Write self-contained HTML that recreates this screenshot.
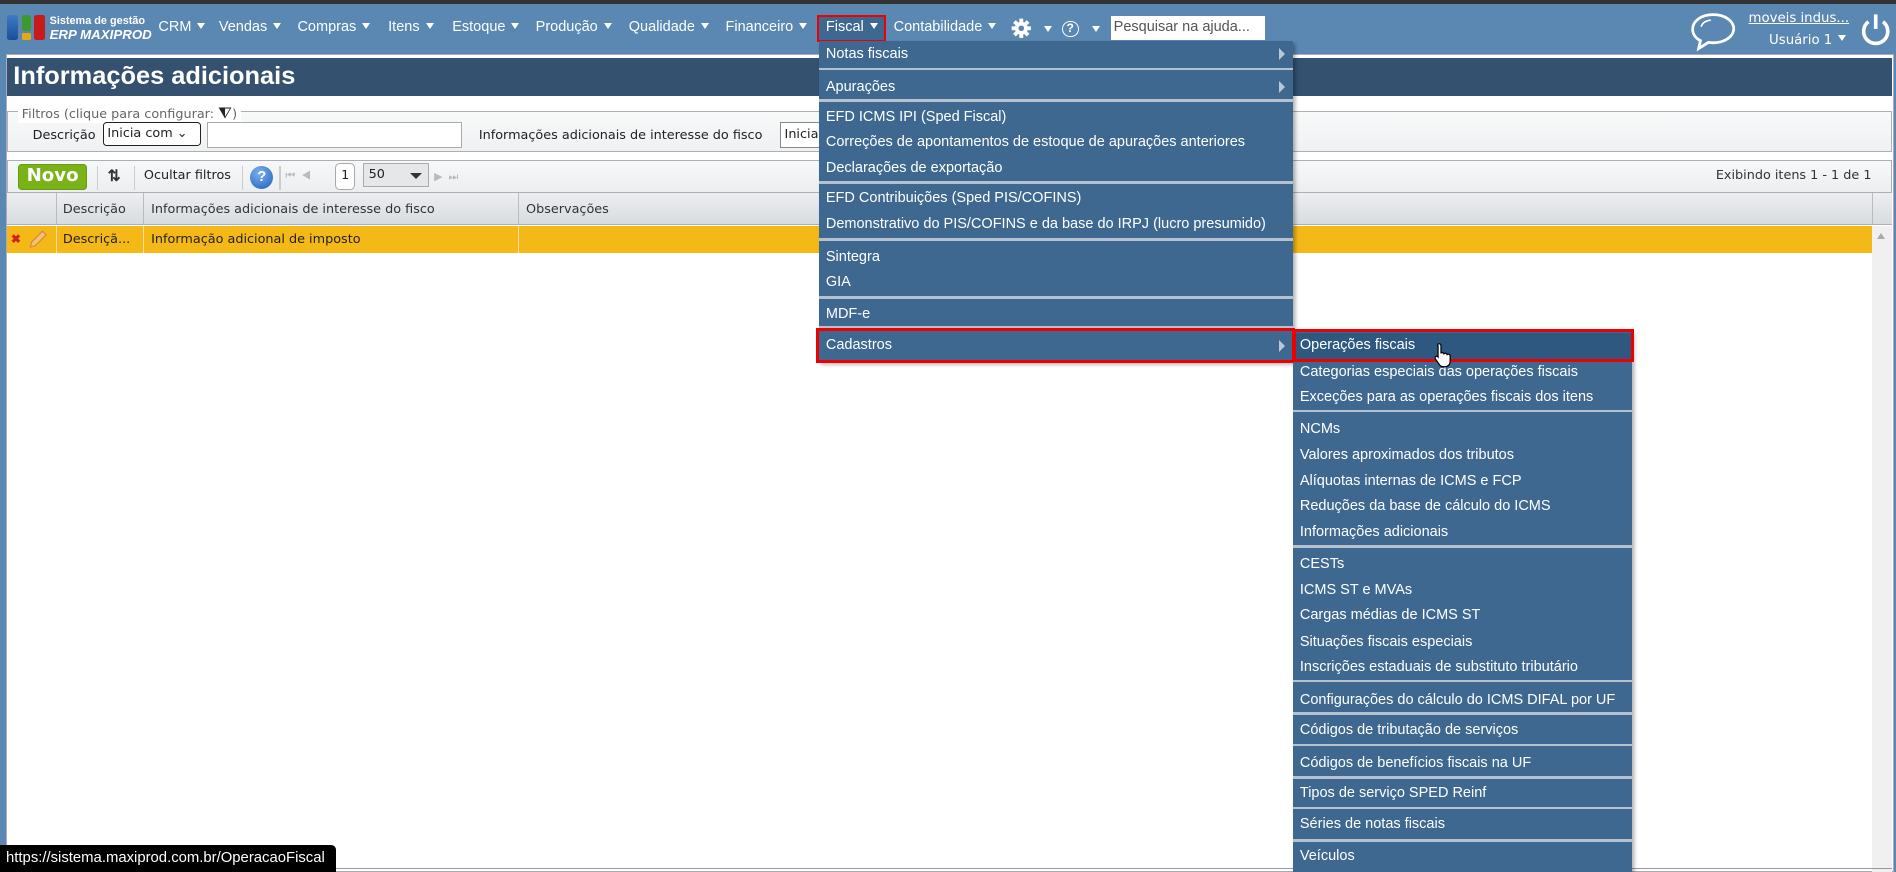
<!DOCTYPE html>
<html><head><meta charset="utf-8">
<style>
*{margin:0;padding:0;box-sizing:border-box}
html,body{width:1896px;height:872px;overflow:hidden;background:#5b87b3}
#root{zoom:1.2092;position:relative;width:1568px;height:721px;font-family:"Liberation Sans",sans-serif;}
.a{position:absolute;white-space:nowrap}
.nav{color:#fff;font-size:12px;top:16px}
.tri{display:inline-block;width:0;height:0;border-left:4px solid transparent;border-right:4px solid transparent;border-top:5px solid #fff;vertical-align:2px;margin-left:5px}
.menu{position:absolute;background:#3f6890;color:#fff;font-size:12px}
.mi{position:absolute;left:6px;white-space:nowrap}
.sep{position:absolute;left:0;right:0;height:2px;background:#b5c1ce}
.t{font-family:"DejaVu Sans",sans-serif;font-size:10.6px;color:#222}
.arr{position:absolute;right:6px;width:0;height:0;border-top:5px solid transparent;border-bottom:5px solid transparent;border-left:5px solid #b9c7d6}
</style></head><body><div id="root">
<div class="a" style="left:0;top:0;width:1568px;height:3px;background:#333"></div>
<div class="a" style="left:6px;top:12px;width:9px;height:21px;background:linear-gradient(#3d7bc4,#1a4f98);border-radius:2px"></div>
<div class="a" style="left:18px;top:12px;width:8px;height:14px;background:#3b9a2a;border-radius:2px"></div>
<div class="a" style="left:18px;top:27px;width:8px;height:6px;background:#e8a812;border-radius:1px"></div>
<div class="a" style="left:28px;top:12px;width:9px;height:21px;background:#c81a1a;border-radius:2px"></div>
<div class="a" style="left:41px;top:12px;color:#fff;font-size:9px;font-weight:bold">Sistema de gestão</div>
<div class="a" style="left:41px;top:22px;color:#fff;font-size:11px;font-weight:bold;font-style:italic">ERP MAXIPROD</div>
<div class="a nav" style="left:131px">CRM<span class="tri"></span></div>
<div class="a nav" style="left:181px">Vendas<span class="tri"></span></div>
<div class="a nav" style="left:246px">Compras<span class="tri"></span></div>
<div class="a nav" style="left:321px">Itens<span class="tri"></span></div>
<div class="a nav" style="left:374px">Estoque<span class="tri"></span></div>
<div class="a nav" style="left:443px">Produção<span class="tri"></span></div>
<div class="a nav" style="left:520px">Qualidade<span class="tri"></span></div>
<div class="a nav" style="left:600px">Financeiro<span class="tri"></span></div>
<div class="a" style="left:676px;top:12px;width:57px;height:23px;border:2px solid #e00;background:#3f6890"></div>
<div class="a nav" style="left:683px">Fiscal<span class="tri"></span></div>
<div class="a nav" style="left:739px">Contabilidade<span class="tri"></span></div>
<svg class="a" style="left:836px;top:15px" width="17" height="17" viewBox="0 0 16 16"><g fill="#fff"><circle cx="8" cy="8" r="5"/><rect x="6.5" y="0.5" width="3" height="15"/><rect x="0.5" y="6.5" width="15" height="3"/><rect x="6.5" y="0.5" width="3" height="15" transform="rotate(45 8 8)"/><rect x="6.5" y="0.5" width="3" height="15" transform="rotate(-45 8 8)"/></g><circle cx="8" cy="8" r="2.2" fill="#5b87b3"/></svg>
<div class="a" style="left:858px;top:14px"><span class="tri"></span></div>
<div class="a" style="left:878px;top:17px;width:14px;height:14px;border:1.5px solid #fff;border-radius:50%;color:#fff;font-size:10px;font-weight:bold;text-align:center;line-height:11px">?</div>
<div class="a" style="left:898px;top:14px"><span class="tri"></span></div>
<div class="a" style="left:919px;top:13px;width:127px;height:20px;background:#fff;color:#555;font-size:12px;padding:3px 2px">Pesquisar na ajuda...</div>
<svg class="a" style="left:1397px;top:9px" width="40" height="34" viewBox="0 0 40 34"><path d="M20 3C10 3 3 8.5 3 15c0 4 2.5 7.5 6.5 9.5L8 31l8-5c1.3.2 2.6.3 4 .3 10 0 17-5.5 17-11.7S30 3 20 3z" fill="none" stroke="#fff" stroke-width="2.3"/><path d="M10 13c1-3 4-5 8-5.5" fill="none" stroke="#fff" stroke-width="1.3"/></svg>
<div class="a" style="left:1446px;top:9px;color:#fff;text-decoration:underline;font-family:'DejaVu Sans',sans-serif;font-size:11px">moveis indus...</div>
<div class="a" style="left:1463px;top:27px;color:#fff;font-family:'DejaVu Sans',sans-serif;font-size:11px">Usuário 1<span class="tri"></span></div>
<svg class="a" style="left:1538px;top:10px" width="26" height="30" viewBox="0 0 26 30"><path d="M7 8a10 10 0 1 0 12 0" fill="none" stroke="#fff" stroke-width="3"/><line x1="13" y1="2" x2="13" y2="14" stroke="#fff" stroke-width="3"/></svg>

<div class="a" style="left:5px;top:45px;width:1561px;height:676px;background:#fff;border:1px solid #aab"></div>
<div class="a" style="left:6px;top:48px;width:1559px;height:31px;background:#34516f"></div>
<div class="a" style="left:11px;top:51px;color:#fff;font-size:21px;font-weight:bold">Informações adicionais</div>
<div class="a" style="left:6px;top:92px;width:1559px;height:34px;border:1px solid #aab0b8;background:linear-gradient(#f8f9f9,#eff1f3)"></div>
<div class="a t" style="left:15px;top:85px;background:#fff;color:#666;padding:0 3px">Filtros (clique para configurar: <span style="font-size:13px;color:#222">&#x29E8;</span>)</div>
<div class="a t" style="left:27px;top:106px">Descrição</div>
<div class="a t" style="left:85px;top:101px;width:81px;height:20px;border:1.5px solid #222;border-radius:3px;background:#fff;padding:2px 3px;font-size:10.6px">Inicia com &#x2304;</div>
<div class="a" style="left:171px;top:101px;width:211px;height:21px;border:1px solid #aaa;background:#fff"></div>
<div class="a t" style="left:396px;top:106px">Informações adicionais de interesse do fisco</div>
<div class="a t" style="left:645px;top:101px;width:40px;height:21px;border:1px solid #888;background:#fff;padding:3px 3px">Inicia</div>
<div class="a" style="left:6px;top:132px;width:1559px;height:28px;border:1px solid #aab0b8;background:linear-gradient(#f7f8f8,#eceef0)"></div>
<div class="a" style="left:15px;top:136px;width:57px;height:21px;background:#7ab317;border:1px solid #6a9a14;border-radius:3px;color:#fff;font-weight:bold;font-size:15px;text-align:center;line-height:19px;font-family:'DejaVu Sans',sans-serif">Novo</div>
<div class="a" style="left:80px;top:137px;width:1px;height:20px;background:#ccc"></div>
<div class="a" style="left:89px;top:137px;font-size:13px;font-weight:bold;color:#333">&#x21C5;</div>
<div class="a" style="left:111px;top:137px;width:1px;height:20px;background:#ccc"></div>
<div class="a t" style="left:119px;top:139px">Ocultar filtros</div>
<div class="a" style="left:200px;top:137px;width:1px;height:20px;background:#ccc"></div>
<div class="a" style="left:207px;top:137px;width:19px;height:19px;border-radius:50%;background:radial-gradient(circle at 40% 30%,#7ab0f0,#1f5fb8);color:#fff;font-weight:bold;font-size:12px;text-align:center;line-height:19px">?</div>
<div class="a" style="left:231px;top:137px;width:1px;height:20px;background:#ccc"></div>
<div class="a" style="left:236px;top:141px;color:#bbb;font-size:9px">&#x23EE;&nbsp;&nbsp;&#x25C0;</div>
<div class="a t" style="left:277px;top:135px;width:17px;height:22px;border:1px solid #aaa;border-radius:4px;background:#fff;text-align:center;line-height:20px">1</div>
<div class="a t" style="left:300px;top:135px;width:55px;height:20px;border:1px solid #aaa;background:#e5e7e9;padding:2px 4px">50 <span style="position:absolute;right:5px;top:7px;border-left:5px solid transparent;border-right:5px solid transparent;border-top:5px solid #333"></span></div>
<div class="a" style="left:359px;top:141px;color:#bbb;font-size:9px">&#x25B6;&nbsp;&nbsp;&#x23ED;</div>
<div class="a t" style="left:1419px;top:139px;color:#333">Exibindo itens 1 - 1 de 1</div>
<div class="a" style="left:6px;top:160px;width:1559px;height:26px;background:linear-gradient(#eceef0,#d9dcdf);border-bottom:1px solid #aab0b8"></div>
<div class="a" style="left:46px;top:160px;width:1px;height:26px;background:#bbb"></div>
<div class="a" style="left:118px;top:160px;width:1px;height:26px;background:#bbb"></div>
<div class="a" style="left:428px;top:160px;width:1px;height:26px;background:#bbb"></div>
<div class="a" style="left:1548px;top:160px;width:1px;height:26px;background:#bbb"></div>
<div class="a t" style="left:52px;top:167px;color:#333">Descrição</div>
<div class="a t" style="left:125px;top:167px;color:#333">Informações adicionais de interesse do fisco</div>
<div class="a t" style="left:435px;top:167px;color:#333">Observações</div>
<div class="a" style="left:6px;top:187px;width:1542px;height:22px;background:#f4b916"></div>
<div class="a" style="left:46px;top:187px;width:1px;height:22px;background:#fbe2a0"></div>
<div class="a" style="left:118px;top:187px;width:1px;height:22px;background:#fbe2a0"></div>
<div class="a" style="left:428px;top:187px;width:1px;height:22px;background:#fbe2a0"></div>
<div class="a" style="left:9px;top:192px;color:#c22;font-size:10px;font-weight:bold">&#x2716;</div>
<svg class="a" style="left:23px;top:190px" width="16" height="16" viewBox="0 0 16 16"><path d="M12 1l3 3-9 9-4 1 1-4z" fill="#f2c27a" stroke="#d88a3a" stroke-width="1"/></svg>
<div class="a t" style="left:52px;top:192px;color:#222">Descriçã...</div>
<div class="a t" style="left:125px;top:192px;color:#222">Informação adicional de imposto</div>
<div class="a" style="left:1548px;top:187px;width:17px;height:534px;background:#f0f0f0"></div>
<div class="a" style="left:1552px;top:193px;border-left:4px solid transparent;border-right:4px solid transparent;border-bottom:5px solid #aaa"></div>
<div class="a" style="left:6px;top:718px;width:1559px;height:1px;background:#999"></div>

<div class="menu" style="left:677px;top:34px;width:392px;height:265px;box-shadow:2px 2px 3px rgba(0,0,0,.3)">
 <div class="mi" style="top:4px">Notas fiscais</div><div class="arr" style="top:6px"></div>
 <div class="sep" style="top:22px"></div>
 <div class="mi" style="top:31px">Apurações</div><div class="arr" style="top:33px"></div>
 <div class="sep" style="top:48px"></div>
 <div class="mi" style="top:56px">EFD ICMS IPI (Sped Fiscal)</div>
 <div class="mi" style="top:77px">Correções de apontamentos de estoque de apurações anteriores</div>
 <div class="mi" style="top:98px">Declarações de exportação</div>
 <div class="sep" style="top:116px"></div>
 <div class="mi" style="top:123px">EFD Contribuições (Sped PIS/COFINS)</div>
 <div class="mi" style="top:145px">Demonstrativo do PIS/COFINS e da base do IRPJ (lucro presumido)</div>
 <div class="sep" style="top:163px"></div>
 <div class="mi" style="top:172px">Sintegra</div>
 <div class="mi" style="top:193px">GIA</div>
 <div class="sep" style="top:211px"></div>
 <div class="mi" style="top:219px">MDF-e</div>
 <div class="sep" style="top:236px"></div>
 <div class="mi" style="top:245px">Cadastros</div><div class="arr" style="top:247px"></div>
</div>
<div class="a" style="left:675px;top:271px;width:396px;height:29px;border:3px solid #e00"></div>

<div class="menu" style="left:1069px;top:274px;width:281px;height:447px;box-shadow:2px 2px 3px rgba(0,0,0,.3)">
 <div class="a" style="left:0;top:1px;width:281px;height:22px;background:#2e587f"></div>
 <div class="mi" style="top:5px">Operações fiscais</div>
 <div class="mi" style="top:27px">Categorias especiais das operações fiscais</div>
 <div class="mi" style="top:48px">Exceções para as operações fiscais dos itens</div>
 <div class="sep" style="top:65px"></div>
 <div class="mi" style="top:74px">NCMs</div>
 <div class="mi" style="top:96px">Valores aproximados dos tributos</div>
 <div class="mi" style="top:117px">Alíquotas internas de ICMS e FCP</div>
 <div class="mi" style="top:138px">Reduções da base de cálculo do ICMS</div>
 <div class="mi" style="top:159px">Informações adicionais</div>
 <div class="sep" style="top:177px"></div>
 <div class="mi" style="top:186px">CESTs</div>
 <div class="mi" style="top:207px">ICMS ST e MVAs</div>
 <div class="mi" style="top:228px">Cargas médias de ICMS ST</div>
 <div class="mi" style="top:250px">Situações fiscais especiais</div>
 <div class="mi" style="top:271px">Inscrições estaduais de substituto tributário</div>
 <div class="sep" style="top:288px"></div>
 <div class="mi" style="top:298px">Configurações do cálculo do ICMS DIFAL por UF</div>
 <div class="sep" style="top:315px"></div>
 <div class="mi" style="top:323px">Códigos de tributação de serviços</div>
 <div class="sep" style="top:341px"></div>
 <div class="mi" style="top:350px">Códigos de benefícios fiscais na UF</div>
 <div class="sep" style="top:368px"></div>
 <div class="mi" style="top:375px">Tipos de serviço SPED Reinf</div>
 <div class="sep" style="top:393px"></div>
 <div class="mi" style="top:401px">Séries de notas fiscais</div>
 <div class="sep" style="top:420px"></div>
 <div class="mi" style="top:427px">Veículos</div>
</div>
<div class="a" style="left:1069px;top:272px;width:282px;height:27px;border:3px solid #e00"></div>
<svg class="a" style="left:1185px;top:283px" width="18" height="22" viewBox="0 0 18 22"><path d="M5 1.5c1 0 1.6.6 1.6 1.6V9l1-.2c.8 0 1.3.4 1.5 1 .3-.4.8-.6 1.3-.5.7.1 1.1.5 1.3 1.1.3-.3.8-.4 1.3-.3.8.2 1.2.8 1.2 1.6V16c0 2.5-1.8 4.5-4.3 4.5H8.6c-1.6 0-2.6-.7-3.5-2L2 14c-.5-.8-.3-1.6.4-2 .7-.4 1.4-.1 1.8.4V3.1C3.4 2.1 4 1.5 5 1.5z" fill="#fff" stroke="#000" stroke-width="1"/></svg>
<div class="a" style="left:0;top:699px;width:278px;height:22px;background:#000;border-top-right-radius:4px;color:#fff;font-size:12.3px;padding:4px 0 0 5px">https://sistema.maxiprod.com.br/OperacaoFiscal</div>
</div></body></html>
